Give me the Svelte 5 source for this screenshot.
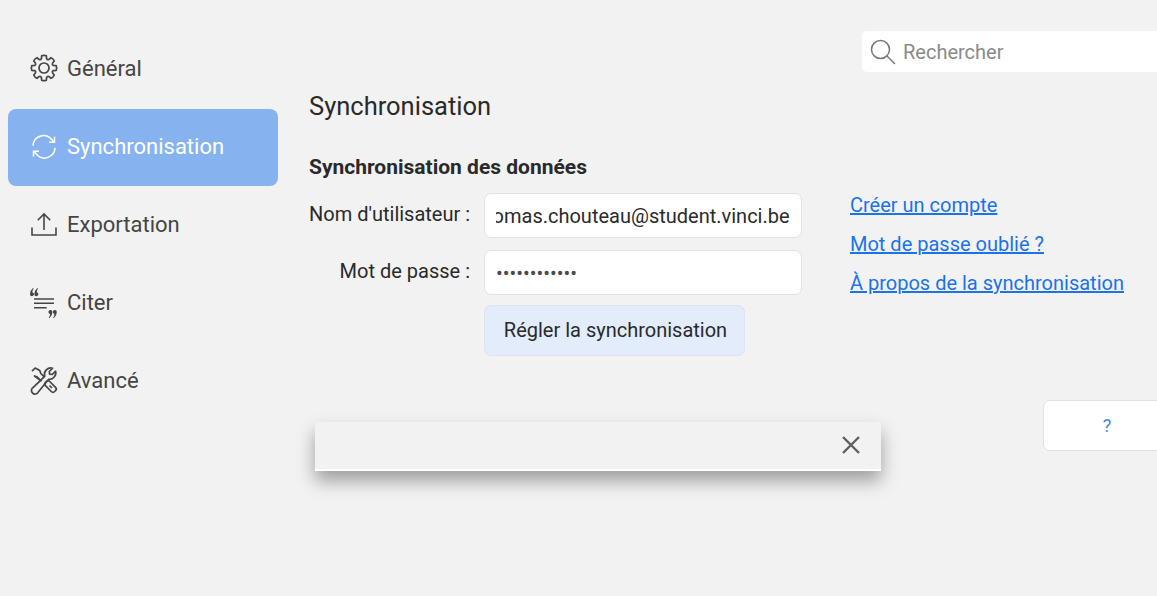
<script>
	import { onMount } from 'svelte';

	let userInput;
	let username = 'thomas.chouteau@student.vinci.be';
	let password = 'motdepasse12';
	let active = 'sync';

	const tabs = [
		{ id: 'general', label: 'Général' },
		{ id: 'sync', label: 'Synchronisation' },
		{ id: 'export', label: 'Exportation' },
		{ id: 'cite', label: 'Citer' },
		{ id: 'advanced', label: 'Avancé' }
	];

	const links = ['Créer un compte', 'Mot de passe oublié ?', 'À propos de la synchronisation'];

	// 8 rounded teeth around (13, 13)
	function gearPath() {
		const pt = (a, r) => `${(13 + r * Math.cos(a)).toFixed(2)} ${(13 + r * Math.sin(a)).toFixed(2)}`;
		let d = '';
		for (let i = 0; i < 8; i++) {
			const a = (i * Math.PI) / 4 - Math.PI / 2;
			const s = 0.19;
			d += `${i ? 'Q' + pt(a - Math.PI / 8, 8.6) + ' ' : 'M'}${pt(a - s - 0.08, 9.7)}`;
			d += `L${pt(a - s, 12.4)}Q${pt(a, 13.2)} ${pt(a + s, 12.4)}L${pt(a + s + 0.08, 9.7)}`;
		}
		const first = (-Math.PI) / 2;
		return d + `Q${pt(first - Math.PI / 8, 8.6)} ${pt(first - 0.27, 9.7)}Z`;
	}

	onMount(() => {
		userInput.scrollLeft = userInput.scrollWidth;
	});
</script>

<div class="page">
	<nav class="sidebar">
		{#each tabs as tab}
			<button class="tab" class:active={active === tab.id} onclick={() => (active = tab.id)}>
				<svg viewBox="0 0 26 26" width="26" height="26" fill="none" stroke="currentColor" stroke-width="1.7">
					{#if tab.id === 'general'}
						<circle cx="13" cy="13" r="5" />
						<path d={gearPath()} stroke-linejoin="round" />
					{:else if tab.id === 'sync'}
						<g transform="translate(0 .8)" stroke-width="1.500">
							<path d="M2 12A10.500 10.500 0 0 1 20.500 5.500L23 8M24 14A10.500 10.500 0 0 1 5.500 20.500L3 18" />
							<path d="M23.500 3V8.500H18M2.500 23V17.500H8" />
						</g>
					{:else if tab.id === 'export'}
						<path d="M1 16.500v7.500h24v-7.500M13 19V3M6.800 9.200L13 3l6.200 6.200" stroke-width="1.600" />
					{:else if tab.id === 'cite'}
						<path d="M3 10h20M3 14.300h20M3 18.700h12.700" stroke-width="1.500" />
						<g fill="currentColor" stroke="none">
							<path d="M-1 5.200Q-1 1.400 2 -1L2.600 -.2Q1.400 1.100 1.300 3.200A2 2 0 1 1 -1 5.200Z" />
							<path d="M3.400 5.200Q3.400 1.400 6.400 -1L7 -.2Q5.800 1.100 5.700 3.200A2 2 0 1 1 3.400 5.200Z" />
							<path d="M21.400 23Q21.400 26.800 18.400 29.200L17.800 28.400Q19 27.100 19.100 25A2 2 0 1 1 21.400 23Z" />
							<path d="M25.800 23Q25.800 26.800 22.800 29.200L22.200 28.400Q23.400 27.100 23.500 25A2 2 0 1 1 25.800 23Z" />
						</g>
					{:else}
						<path d="M1 4.200L4.200 1L8.800 3.600L9.800 6.500L13.500 10.200M10 13.800L6.300 10L3.500 9Z" stroke-linejoin="round" />
						<rect x="13" y="16.500" width="13" height="6" rx="2.400" transform="rotate(45 19.500 19.500)" />
						<path d="M18.500 18.500L21 21" />
						<path d="M24.600 4.200L21.300 7.500L18.600 7.200L18.300 4.500L21.600 1.200A6.500 6.500 0 0 0 13.700 9.300L2.300 20.300A3.600 3.600 0 1 0 7.300 25L17.700 12.300A6.500 6.500 0 0 0 24.600 4.200Z" stroke-linejoin="round" />
					{/if}
				</svg>
				<span>{tab.label}</span>
			</button>
		{/each}
	</nav>

	<main class="content">
		<div class="toolbar">
			<label class="search">
				<svg viewBox="0 0 26 26" width="26" height="26" fill="none" stroke="#777" stroke-width="1.500">
					<circle cx="10.500" cy="10.500" r="9" />
					<path d="M17 17l8 8" />
				</svg>
				<input type="text" placeholder="Rechercher" />
			</label>
		</div>

		<h1>Synchronisation</h1>
		<h2>Synchronisation des données</h2>

		<div class="columns">
			<form class="form">
				<label for="user">Nom d'utilisateur :</label>
				<input id="user" type="text" bind:this={userInput} bind:value={username} />
				<label for="pass">Mot de passe :</label>
				<input id="pass" type="password" bind:value={password} />
				<button type="button" class="setup">Régler la synchronisation</button>
			</form>
			<div class="links">
				{#each links as link}
					<a href="#top">{link}</a>
				{/each}
			</div>
		</div>

		<div class="help-row">
			<button class="help">?</button>
		</div>
	</main>

	<div class="bar">
		<button class="close" aria-label="Fermer">
			<svg viewBox="0 0 20 20" width="20" height="20" fill="none" stroke="#5f5f5f" stroke-width="2.400">
				<path d="M2 2l16 16M18 2L2 18" />
			</svg>
		</button>
	</div>
</div>

<style>
	:global(body) {
		background: #f2f2f2;
		overflow: hidden;
	}

	.page {
		display: grid;
		grid-template-columns: 309px 1fr;
		width: 1157px;
		height: 596px;
		overflow: hidden;
		position: relative;
		font-family: Roboto, sans-serif;
		color: #2a2a2a;
	}

	.sidebar {
		display: flex;
		flex-direction: column;
		gap: 1px;
		padding: 31px 0 0 8px;
		width: 270px;
	}

	.tab {
		display: flex;
		align-items: center;
		gap: 10px;
		height: 77px;
		padding: 0 0 3px 23px;
		border: 0;
		border-radius: 8px;
		background: none;
		color: #454545;
		font: inherit;
		font-size: 22px;
		text-align: left;
	}

	.tab svg {
		overflow: visible;
	}

	.tab.active {
		background: #86b3ef;
		color: #fff;
	}

	.content {
		min-width: 0;
	}

	.toolbar {
		display: flex;
		justify-content: flex-end;
		padding-top: 31px;
		margin-right: -14px;
	}

	.search {
		display: flex;
		align-items: center;
		gap: 7px;
		width: 309px;
		height: 41px;
		padding-left: 8px;
		box-sizing: border-box;
		background: #fff;
		border-radius: 5px;
	}

	.search input {
		flex: 1;
		min-width: 0;
		border: 0;
		outline: 0;
		padding: 0;
		background: none;
		font: inherit;
		font-size: 20px;
	}

	.search input::placeholder {
		color: #8a8a8a;
		opacity: 1;
	}

	h1 {
		margin: 17px 0 0;
		font-size: 25.500px;
		font-weight: 400;
		line-height: 34px;
	}

	h2 {
		margin: 30px 0 0;
		font-size: 21px;
		font-weight: 700;
		line-height: 28px;
	}

	.columns {
		display: flex;
		gap: 48px;
		margin-top: 12px;
	}

	.form {
		display: grid;
		grid-template-columns: 161px 318px;
		grid-auto-rows: 45px;
		column-gap: 14px;
		row-gap: 12px;
		align-items: center;
	}

	.form label {
		padding-bottom: 4px;
		font-size: 20px;
		text-align: right;
		white-space: nowrap;
	}

	.form input {
		box-sizing: border-box;
		width: 100%;
		height: 45px;
		padding: 0 11px;
		border: 1.500px solid #e1e1e6;
		border-radius: 7px;
		outline: 0;
		background: #fff;
		color: #2a2a2a;
		font: inherit;
		font-size: 20px;
	}

	.form input[type='password'] {
		color: #4a4a4a;
	}

	.setup {
		grid-column: 2;
		justify-self: start;
		height: 51px;
		width: 261px;
		margin-top: 1px;
		padding: 0 0 0 2px;
		border: 1.500px solid #dfe3ec;
		border-radius: 7px;
		background: #e2ecfb;
		color: #2a2a2a;
		font: inherit;
		font-size: 20px;
	}

	.links {
		display: flex;
		flex-direction: column;
		gap: 11px;
		margin-top: -2px;
	}

	.links a {
		color: #1a73e8;
		font-size: 20px;
		line-height: 28px;
	}

	.help-row {
		display: flex;
		justify-content: flex-end;
		margin: 48px -14px 0 0;
	}

	.help {
		width: 128px;
		height: 51px;
		border: 1.500px solid #e1e1e6;
		border-radius: 7px;
		background: #fff;
		color: #3b86ea;
		font: inherit;
		font-size: 18px;
	}

	.bar {
		position: absolute;
		left: 315px;
		top: 422px;
		width: 566px;
		height: 49px;
		box-sizing: border-box;
		display: flex;
		justify-content: flex-end;
		align-items: center;
		padding: 0 20px 2px 0;
		background: #f2f2f2;
		border-bottom: 2px solid #fff;
		box-shadow: 0 10px 18px rgba(0, 0, 0, 0.35);
	}

	.close {
		display: flex;
		padding: 0;
		border: 0;
		background: none;
	}
</style>
